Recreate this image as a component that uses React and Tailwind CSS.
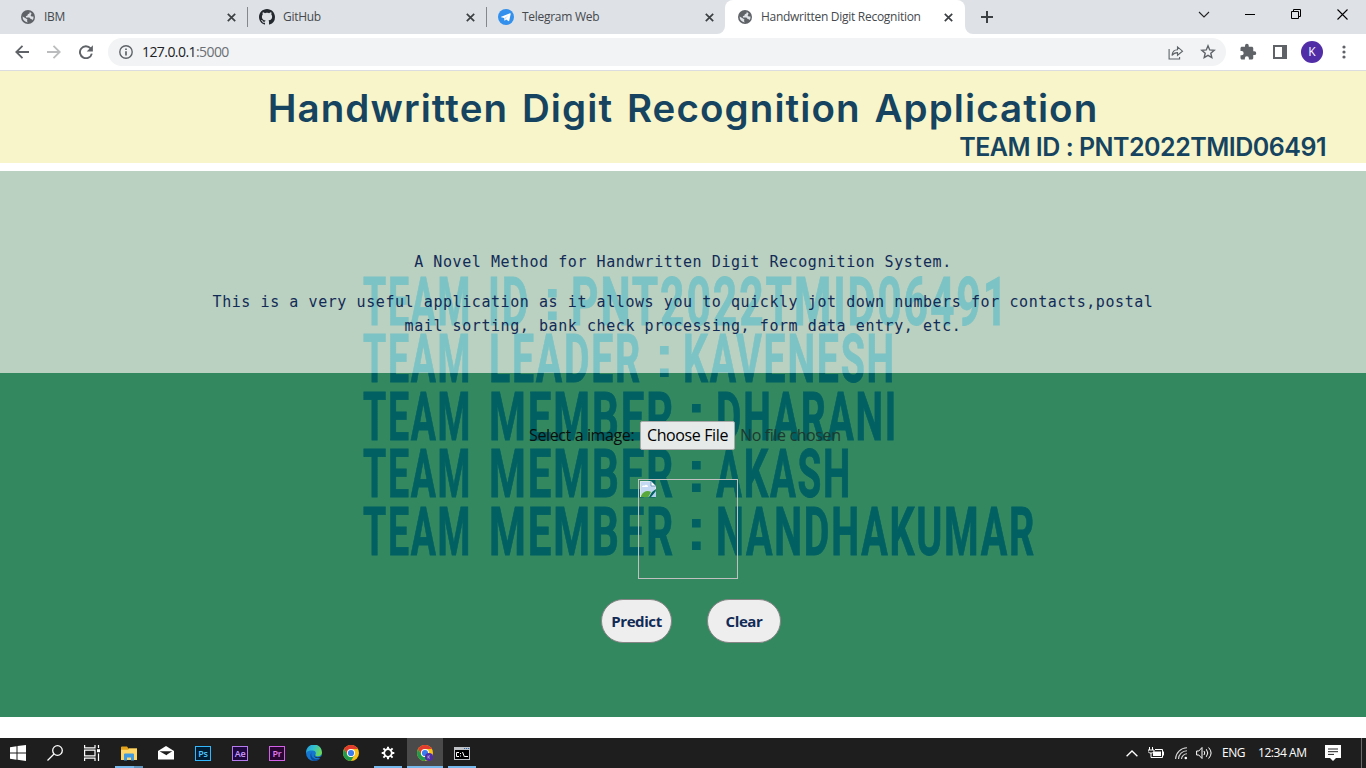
import React from "react";

const ui = "font-['Open_Sans','Noto_Sans',sans-serif]";

const Globe = () => (
  <svg width="14" height="14" viewBox="0 0 14 14">
    <circle cx="7" cy="7" r="7" fill="#5f6368" />
    <path d="M7.6 1.6C9 1.8 9 2.8 8.4 3.4L6.8 4.2 6.5 5.6 4.8 6.2 5 7.4H8.4L9.4 8.8 11.2 9.4 11.6 10.2A5.5 5.5 0 0 0 12.5 6.4L10.6 6.6 9.6 5.4 10.6 3.4A5.6 5.6 0 0 0 7.6 1.6Z" fill="#dee1e6" />
    <path d="M1.6 6.6 5 8.4 6.4 9.4 6 11 6.8 12.4A5.5 5.5 0 0 1 1.6 6.6Z" fill="#dee1e6" />
  </svg>
);
const GitHub = () => (
  <svg width="16" height="16" viewBox="0 0 16 16" fill="#24292f">
    <path d="M8 0C3.58 0 0 3.58 0 8c0 3.54 2.29 6.53 5.47 7.59.4.07.55-.17.55-.38 0-.19-.01-.82-.01-1.49-2.01.37-2.53-.49-2.69-.94-.09-.23-.48-.94-.82-1.13-.28-.15-.68-.52-.01-.53.63-.01 1.08.58 1.23.82.72 1.21 1.87.87 2.33.66.07-.52.28-.87.51-1.07-1.78-.2-3.64-.89-3.64-3.95 0-.87.31-1.59.82-2.15-.08-.2-.36-1.02.08-2.12 0 0 .67-.21 2.2.82.64-.18 1.32-.27 2-.27s1.36.09 2 .27c1.53-1.04 2.2-.82 2.2-.82.44 1.1.16 1.92.08 2.12.51.56.82 1.27.82 2.15 0 3.07-1.87 3.75-3.65 3.95.29.25.54.73.54 1.48 0 1.07-.01 1.93-.01 2.2 0 .21.15.46.55.38A8.01 8.01 0 0 0 16 8c0-4.42-3.58-8-8-8Z" />
  </svg>
);
const Telegram = () => (
  <svg width="16" height="16" viewBox="0 0 16 16">
    <circle cx="8" cy="8" r="8" fill="#3390ec" />
    <path d="M3.2 7.8 12 4.3c.5-.2.8.1.7.6l-1.5 6.8c-.1.5-.4.6-.8.4L8.1 10.4 7 11.5c-.3.3-.5.1-.6-.2L6 9.1 3.2 8.3c-.3-.1-.3-.4 0-.5Z" fill="#fff" />
    <path d="M6.4 9.2 10.5 6.2 7.4 9.6 6.7 11.2Z" fill="#a9d1f7" />
  </svg>
);
const Close = () => (
  <svg width="9" height="9" viewBox="0 0 9 9" stroke="#3c4043" strokeWidth="1.7"><path d="M.8.8l7.4 7.4M8.2.8.8 8.2" /></svg>
);

function Tab({ icon, title, shape }) {
  const active = shape === "active";
  return (
    <div className={"flex h-[34px] shrink-0 items-center " + (active ? "relative w-[240px] rounded-t-lg bg-white pr-[12px] pl-[12px]" : shape === "first" ? "w-[247px] pr-[11px] pl-5" : shape === "last" ? "w-[238px] pr-[11px] pl-[11px]" : "w-[238px] pr-[11px] pl-[11px]")}>
      {active && (
        <>
          <svg className="absolute bottom-0 -left-2" width="8" height="8"><path d="M8 0v8H0a8 8 0 0 0 8-8Z" fill="#fff" /></svg>
          <svg className="absolute -right-2 bottom-0" width="8" height="8"><path d="M0 0v8h8a8 8 0 0 1-8-8Z" fill="#fff" /></svg>
        </>
      )}
      <span className="flex w-4 justify-center">{icon}</span>
      <span className="ml-2 text-[12px] tracking-[-0.28px] whitespace-nowrap text-[#45494d]">{title}</span>
      <span className="ml-auto"><Close /></span>
    </div>
  );
}

function Chrome() {
  return (
    <div className={ui}>
      <div className="flex h-[34px] items-center bg-[#dee1e6]">
        <Tab icon={<Globe />} title="IBM" shape="first" />
        <div className="h-5 w-px bg-[#84878b]" />
        <Tab icon={<GitHub />} title="GitHub" />
        <div className="h-5 w-px bg-[#84878b]" />
        <Tab icon={<Telegram />} title="Telegram Web" shape="last" />
        <Tab icon={<Globe />} title="Handwritten Digit Recognition" shape="active" />
        <svg className="ml-4" width="12" height="12" stroke="#3c4043" strokeWidth="2"><path d="M6 0v12M0 6h12" /></svg>
        <div className="ml-auto flex items-center pr-[18px] pb-1.5">
          <svg width="12" height="7" fill="none" stroke="#222" strokeWidth="1.1"><path d="M1 1l5 5 5-5" /></svg>
          <svg className="ml-[35px]" width="10" height="2" stroke="#000"><path d="M0 1.5h10" /></svg>
          <svg className="ml-[36px]" width="11" height="11" fill="none" stroke="#000"><path d="M.5 2.5h7v7h-7zM2.5 2.5v-2h7v7h-2" /></svg>
          <svg className="ml-[35px]" width="11" height="11" stroke="#000" strokeWidth="1.1"><path d="M.5.5l10 10M10.5.5l-10 10" /></svg>
        </div>
      </div>
      <div className="flex h-9 items-center bg-white pr-4 pl-[15px]">
        <svg width="14" height="14" fill="none" stroke="#5f6368" strokeWidth="1.8"><path d="M14 7H1.5M7.5.8 1.3 7l6.2 6.2" /></svg>
        <svg className="ml-[18px]" width="14" height="14" fill="none" stroke="#babcbe" strokeWidth="1.8"><path d="M0 7h12.5M6.5.8 12.7 7l-6.2 6.2" /></svg>
        <svg className="ml-[18px]" width="14" height="14" viewBox="0 0 14 14"><path d="M11.6 3.4A6 6 0 1 0 12.8 8.6" fill="none" stroke="#5f6368" strokeWidth="1.9" /><path d="M13.9.2v6.2H7.7Z" fill="#5f6368" /></svg>
        <div className="ml-[15px] flex h-7 w-[1118px] items-center rounded-full bg-[#f1f3f4] pr-[10px] pl-[11px]">
          <svg width="14" height="14" fill="none" stroke="#5f6368" strokeWidth="1.4"><circle cx="7" cy="7" r="6.2" /><path d="M7 6.2v4.3M7 3.4v1.6" strokeWidth="1.7" /></svg>
          <span className="ml-[9px] pb-0.5 text-[14px] tracking-[-0.57px] text-[#202124]">127.0.0.1<span className="text-[#6b6f74]">:5000</span></span>
          <svg className="ml-auto" width="16" height="15" fill="none" stroke="#5f6368" strokeWidth="1.1"><path d="M1.1 4v10h10.500v-2M4 10.500C4.400 6.500 6.500 4.800 9.500 4.800V1.900L14.500 6.200 9.500 10.300V7.600C7 7.600 5.400 8.400 4 10.500Z" /></svg>
          <svg className="ml-[16px]" width="16" height="16" viewBox="0 0 16 16" fill="none" stroke="#5f6368" strokeWidth="1.4"><path d="M8 1.800 9.700 5.900l4.500.4-3.400 2.900 1 4.400L8 11.300l-3.800 2.300 1-4.400L1.800 6.300l4.500-.4Z" /></svg>
        </div>
        <svg className="ml-[13px]" width="18" height="18" viewBox="0 0 24 24" fill="#5f6368"><path d="M20.5 11H19V7c0-1.100-.9-2-2-2h-4V3.500a2.500 2.500 0 0 0-5 0V5H4c-1.100 0-2 .9-2 2v3.800h1.500a2.700 2.700 0 0 1 0 5.400H2V20c0 1.100.9 2 2 2h3.800v-1.500a2.700 2.700 0 0 1 5.400 0V22H17c1.100 0 2-.9 2-2v-4h1.500a2.500 2.500 0 0 0 0-5Z" /></svg>
        <svg className="ml-[16px]" width="14" height="14"><path d="M1 1h12v12H1Z" fill="none" stroke="#5f6368" strokeWidth="2" /><path d="M9 0h5v14H9Z" fill="#5f6368" /></svg>
        <div className="ml-[14px] flex size-[22px] items-center justify-center rounded-full bg-[#512da8] text-[12px] text-white">K</div>
        <svg className="ml-[19px]" width="4" height="14" fill="#5f6368"><circle cx="2" cy="2" r="1.6" /><circle cx="2" cy="7" r="1.6" /><circle cx="2" cy="12" r="1.6" /></svg>
      </div>
      <div className="h-px bg-[#dadce0]" />
    </div>
  );
}

const credits = [
  [["TEAM", 363, 109], ["ID", 488, 42], [":", 548], ["PNT2022TMID06491", 571, 438]],
  [["TEAM", 363, 109], ["LEADER", 489, 153], [":", 660], ["KAVENESH", 683, 213]],
  [["TEAM", 363, 109], ["MEMBER", 489, 186], [":", 692], ["DHARANI", 716, 182]],
  [["TEAM", 363, 109], ["MEMBER", 489, 186], [":", 692], ["AKASH", 716, 136]],
  [["TEAM", 363, 109], ["MEMBER", 489, 186], [":", 692], ["NANDHAKUMAR", 716, 320]],
];

function Watermark() {
  return (
    <svg className="pointer-events-none absolute inset-0" width="1366" height="546">
      <defs>
        <linearGradient id="ink" gradientUnits="userSpaceOnUse" x1="0" y1="0" x2="0" y2="546">
          <stop offset={202 / 546} stopColor="#7bc3c4" />
          <stop offset={202 / 546} stopColor="#006062" />
        </linearGradient>
      </defs>
      <g fill="url(#ink)" fontFamily="Roboto, 'Liberation Sans', sans-serif" fontWeight="700" fontSize="67.500">
        {credits.map((line, i) =>
          line.map(([word, x, w]) =>
            word === ":" ? (
              <text key={i + word} x={x - 6} y={149 + i * 57.4} fontSize="62" fontFamily="'Liberation Sans', sans-serif">:</text>
            ) : (
              <text key={i + word} x={x} y={154 + i * 57.4} textLength={w} lengthAdjust="spacingAndGlyphs" stroke="url(#ink)" strokeWidth="0.8" letterSpacing="3">{word}</text>
            )
          )
        )}
      </g>
    </svg>
  );
}

const BrokenImage = () => (
  <svg width="16" height="16" viewBox="0 0 16 16">
    <path d="M0 0h11l5 5v3l-4 3-3 5H0Z" fill="#c3d9f3" />
    <path d="M.5 16V.5h10.300l4.700 4.700V8" fill="none" stroke="#dfe7ec" />
    <path d="M2 6c0-1.500 1.500-2 2.500-1.300C5.500 3 8 3.800 8 6Z" fill="#fff" />
    <path d="M11 0v5h5Z" fill="#fff" stroke="#4d829d" strokeWidth=".7" />
    <path d="M1 15c2-5 7-6 10-4l-2.500 5H1Z" fill="#58a83c" />
    <path d="M16 10v6h-5Z" fill="#b3d0ef" />
  </svg>
);

function Page() {
  return (
    <>
      <header className="h-[92px] bg-[#f7f5c9] font-['Inter',sans-serif] font-semibold text-[#154360]">
        <h1 className="pt-[9px] text-center text-[38.500px] leading-[56px] tracking-[1.100px] whitespace-nowrap [word-spacing:3px]">Handwritten Digit Recognition Application</h1>
        <h2 className="-mt-px pr-10 text-right text-[25px] leading-[24px] tracking-[-0.500px] whitespace-nowrap">TEAM ID : PNT2022TMID06491</h2>
      </header>
      <main className="relative mt-2 h-[546px] bg-[#338860]">
        <section className="h-[202px] bg-[#bad0c0]" />
        <Watermark />
        <div className="absolute inset-0 flex flex-col">
          <section className="h-[202px] pt-[79px] text-center font-['DejaVu_Sans_Mono','Liberation_Mono',monospace] text-[15px] leading-6 tracking-[0.57px] whitespace-pre text-[#122b56]">
            <p>A Novel Method for Handwritten Digit Recognition System.</p>
            <p className="mt-4">This is a very useful application as it allows you to quickly jot down numbers for contacts,postal</p>
            <p>mail sorting, bank check processing, form data entry, etc.</p>
          </section>
          <section className={"flex flex-col " + ui}>
            <div className="mt-[47px] flex h-[30px] items-center pl-[529px] text-[16px] tracking-[-0.38px] whitespace-nowrap text-[#0a0f0d]">
              <label className="w-[111px]">Select a image:</label>
              <button className="flex h-[29px] w-[95px] items-center justify-center rounded-[2px] border border-[#a9a9a9] bg-[#f0f0f0]/95 text-black">Choose File</button>
              <span className="ml-[5px] text-[#1c3a30]">No file chosen</span>
            </div>
            <div className="mt-[29px] ml-[638px] size-[100px] border border-[#c0c0c0] p-px"><BrokenImage /></div>
            <div className="mt-5 ml-[601px] flex gap-[35px] text-[15px] font-bold tracking-[-0.4px] text-[#122b56]">
              <button className="h-[44px] w-[71px] rounded-[22px] border border-[#858585] bg-[#eee]">Predict</button>
              <button className="h-[44px] w-[74px] rounded-[22px] border border-[#858585] bg-[#eee]">Clear</button>
            </div>
          </section>
        </div>
      </main>
    </>
  );
}

const ChromeLogo = ({ badge }) => (
  <svg width="16" height="16" viewBox="0 0 16 16">
    <circle cx="8" cy="8" r="8" fill="#fbc116" />
    <path d="M1.1 4A8 8 0 0 1 14.900 4H8a4 4 0 0 0-3.500 6Z" fill="#e33b2e" />
    <path d="M1.100 4A8 8 0 0 0 8 16l3.500-6a4 4 0 0 1-7 0Z" fill="#229a4b" />
    <circle cx="8" cy="8" r="4" fill="#fff" />
    <circle cx="8" cy="8" r="3.100" fill="#3b7ded" />
    {badge && <><circle cx="12" cy="12" r="4" fill="#512da8" /><path d="M11 10.500v3M13 10.500l-1.800 1.500 1.800 1.500" stroke="#c7b9e8" strokeWidth=".7" fill="none" /></>}
  </svg>
);
const Adobe = ({ label, cls }) => (
  <div className={"flex h-[15px] w-4 items-center justify-center border text-[9px] leading-none font-semibold tracking-[-0.2px] " + cls}>{label}</div>
);

function Slot({ children, state, wide }) {
  return (
    <div className={"flex h-[30px] w-[37px] shrink-0 pr-px "}>
      <div className={"relative flex w-9 items-center justify-center " + (state === "active" ? "bg-[#4a4a4a]" : "")}>
        {children}
        {state && <div className={"absolute bottom-0 h-0.5 bg-[#76b9ed] " + (state === "active" ? "inset-x-0" : "inset-x-1")} />}
        {wide && <div className="absolute right-1 bottom-0 h-0.5 w-[9px] bg-[#5e93bc]" />}
      </div>
    </div>
  );
}

function Taskbar() {
  return (
    <div className={"flex h-[30px] items-center bg-[#1e1e1e] text-white " + ui}>
      <Slot><svg width="16" height="16" fill="#fff"><path d="M0 2.200 6.500 1.300V7.500H0ZM7.500 1.100 16 0v7.500H7.500ZM0 8.500h6.500v6.200L0 13.800ZM7.500 8.500H16V16l-8.500-1.200Z" /></svg></Slot>
      <Slot><svg width="16" height="16" fill="none" stroke="#fff" strokeWidth="1.3"><circle cx="10.500" cy="5.500" r="4.800" /><path d="M7 9 .5 15.500" /></svg></Slot>
      <Slot><svg width="16" height="16" fill="none" stroke="#fff" strokeWidth="1.2"><path d="M.6 0v2.800h10.400V0M.6 5.200h10.400v5.600H.6ZM.6 16v-2.800h10.400V16M14.500 0v3M14.500 8.500V16" /><path d="M13 4.200h3v3h-3z" fill="#fff" stroke="none" /></svg></Slot>
      <Slot state="open" wide><svg width="16" height="15"><path d="M0 2V1.200Q0 .5 1 .5h5l1.500 2H16V14H0Z" fill="#e3a21a" /><path d="M0 3.800h7l1.200-1.300H16V14H0Z" fill="#ffd768" /><path d="M3 14.500V8.500Q3 7.500 4 7.500h8q1 0 1 1v6h-3V11.500H6v3Z" fill="#3f9ae0" /></svg></Slot>
      <Slot><svg width="16" height="14"><path d="M0 5 8 0l8 5v8.500H0Z" fill="#fff" /><path d="M1.500 5.300h12.800L9.500 8.300l-1 1Z" fill="#1e1e1e" /></svg></Slot>
      <Slot><Adobe label="Ps" cls="border-[#31b8ff] bg-[#001e36] text-[#4fc8ff]" /></Slot>
      <Slot><Adobe label="Ae" cls="border-[#b57bee] bg-[#1f0740] text-[#c79aff]" /></Slot>
      <Slot><Adobe label="Pr" cls="border-[#d45fe8] bg-[#2a0634] text-[#e47cf5]" /></Slot>
      <Slot>
        <svg width="16" height="16" viewBox="0 0 16 16">
          <defs>
            <linearGradient id="edge" x1="0" x2="1" y2=".4"><stop stopColor="#2395dc" /><stop offset=".5" stopColor="#31bfd0" /><stop offset="1" stopColor="#6bd65a" /></linearGradient>
          </defs>
          <circle cx="8" cy="8" r="8" fill="#1476cf" />
          <path d="M0 7.500A8 8 0 0 1 16 7.500c0 2.500-2 3.800-4 3.800s-3-.8-2.500-1.800c1-1.500 0-4-3-4S1 6 0 8Z" fill="url(#edge)" />
          <path d="M6.500 6.500c-2 1.500-2 6 2.500 7.500 2 .6 4.500-.3 5.500-1.300A8 8 0 0 1 8 16C4 15 3 9 6.500 6.500Z" fill="#0c4a9c" />
          <path d="M8.600 8.500c-1 2 .5 3.900 3 3.900a6 6 0 0 0 3.700-1.200l1 1.500-1 1-2-.8C10.500 13.600 7 12 8.600 8.500Z" fill="#1e1e1e" />
        </svg>
      </Slot>
      <Slot><ChromeLogo /></Slot>
      <Slot state="open">
        <svg width="14" height="14" viewBox="-7 -7 14 14" stroke="#fff"><circle r="3.800" fill="none" strokeWidth="1.800" /><path d="M-1.700-4.500v-2M1.700-4.500v2M-1.700 4.500v2M1.700 4.500v2M4.500-1.700h2M4.500 1.700h2M-4.500-1.700h-2M-4.500 1.700h-2" strokeWidth="0" /><path d="M0-4v-2.300M0 4v2.300M4 0h2.300M-4 0h-2.300M2.900-2.900l1.700-1.700M2.900 2.900l1.700 1.700M-2.900-2.900l-1.700-1.700M-2.900 2.900l-1.700 1.700" strokeWidth="2" /></svg>
      </Slot>
      <Slot state="active"><ChromeLogo badge /></Slot>
      <Slot state="open">
        <svg width="16" height="13"><path d="M0 0h16v13H0Z" fill="#bfc3c7" /><path d="M1 3h14v9H1Z" fill="#000" /><path d="M10 1.500h1.200M12 1.500h1.200M14 1.500h1.200" stroke="#3566a8" /><path d="M5 5.500H2.500v4H5M6.500 6v1M6.500 8.500v1M8.500 5l2 5M11 9.500h3" stroke="#fff" fill="none" /></svg>
      </Slot>
      <div className="ml-auto flex h-full items-center">
        <svg width="12" height="7" fill="none" stroke="#fff" strokeWidth="1.300"><path d="M.6 6.300 6 1l5.400 5.300" /></svg>
        <svg className="ml-[10px]" width="16" height="12" fill="none" stroke="#fff"><path d="M1.500 0v3M4.500 0v3M0 3h6v1.500L4.500 6h-3L0 4.500ZM3 6v4.500h11.500v-8H7M15.500 4.500v4" /><path d="M5 4.500h8v4.500H5Z" fill="#fff" stroke="none" /></svg>
        <svg className="ml-[11px]" width="13" height="13" fill="none" stroke="#fff" strokeWidth="1.100"><path d="M.6 12A11.500 11.500 0 0 1 12 .8M3.500 12A8.500 8.500 0 0 1 12 3.800M6.500 12A5.500 5.500 0 0 1 12 6.800" stroke="#d8d8d8" /><circle cx="10.800" cy="11" r="1.300" fill="#fff" stroke="none" /></svg>
        <svg className="ml-[8px]" width="17" height="14" fill="none" stroke="#fff"><path d="M.6 5h2.200L6 1.500v11L2.800 9H.6ZM8 5q1.500 2 0 4M10.300 3.200q3 3.800 0 7.600M12.600 1.500q5 5.500 0 11" /></svg>
        <span className="ml-[9px] w-[23px] text-[12px] tracking-[-0.5px]">ENG</span>
        <span className="ml-[13px] w-[49px] text-[12px] tracking-[-0.45px] whitespace-nowrap">12:34 AM</span>
        <svg className="ml-[18px]" width="16" height="16"><path d="M0 0h16v13h-5l-3 3-3-3H0Z" fill="#fff" /><path d="M3 4h10M3 6.700h10M3 9.400h6" stroke="#222" /></svg>
        <div className="ml-5 h-full w-px bg-[#6b6b6b]" />
        <div className="w-1" />
      </div>
    </div>
  );
}

export default function App() {
  return (
    <div className="flex h-[768px] w-[1366px] flex-col overflow-hidden bg-white">
      <Chrome />
      <Page />
      <div className="mt-auto"><Taskbar /></div>
    </div>
  );
}
